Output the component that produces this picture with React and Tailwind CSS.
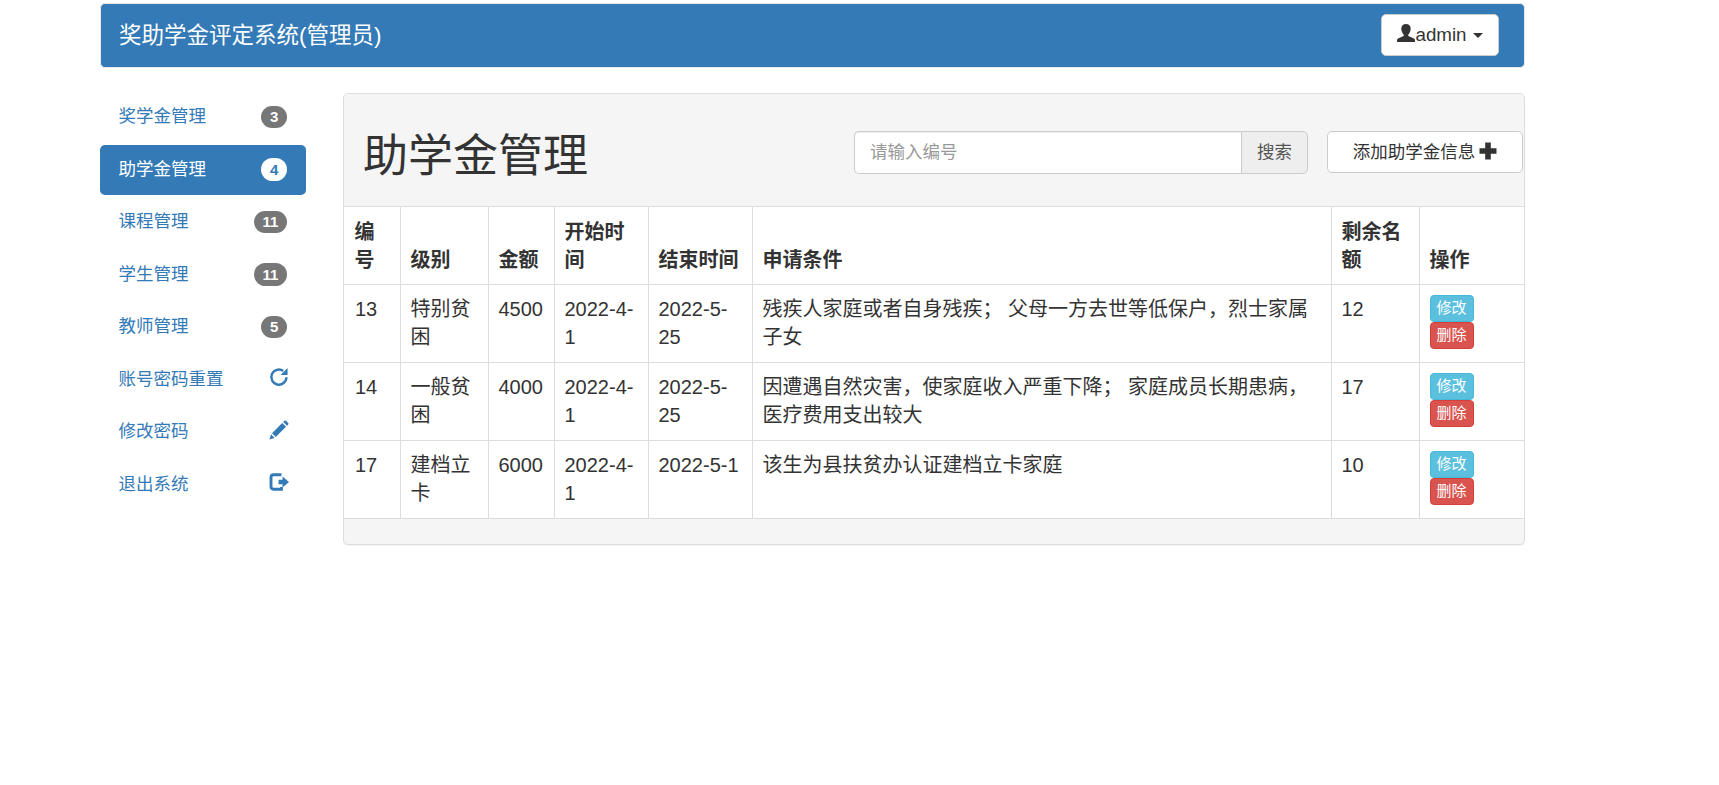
import React from "react";

const menus = [
  { name: "奖学金管理", count: 3 },
  { name: "助学金管理", count: 4, active: true },
  { name: "课程管理", count: 11 },
  { name: "学生管理", count: 11 },
  { name: "教师管理", count: 5 },
  { name: "账号密码重置", icon: "refresh" },
  { name: "修改密码", icon: "pencil" },
  { name: "退出系统", icon: "logout" },
];

const columns = ["编号", "级别", "金额", "开始时间", "结束时间", "申请条件", "剩余名额", "操作"];

const rows = [
  ["13", "特别贫困", "4500", "2022-4-1", "2022-5-25", "残疾人家庭或者自身残疾； 父母一方去世等低保户，烈士家属子女", "12"],
  ["14", "一般贫困", "4000", "2022-4-1", "2022-5-25", "因遭遇自然灾害，使家庭收入严重下降； 家庭成员长期患病，医疗费用支出较大", "17"],
  ["17", "建档立卡", "6000", "2022-4-1", "2022-5-1", "该生为县扶贫办认证建档立卡家庭", "10"],
];

const Icon = ({ name, className }) => (
  <svg viewBox="0 0 18 18" className={className} fill="currentColor">
    {name === "refresh" && (
      <>
        <path d="M15.7 9.200A6.800 6.800 0 1 1 12.800 3.500" fill="none" stroke="currentColor" strokeWidth="2.200" />
        <path d="M16.700.9v6.300h-6.300z" />
      </>
    )}
    {name === "pencil" && (
      <path d="M.4 17.600l1.500-4.700 3.200 3.200zM2.700 11.900L11.900 2.700l3.400 3.400-9.200 9.200zM12.800 1.800L13.900.7q.7-.6 1.400 0l2 2q.6.7 0 1.400l-1.100 1.100z" />
    )}
    {name === "logout" && (
      <>
        <path d="M11.200 2.500H4.200Q1.800 2.500 1.800 4.900v8.200q0 2.400 2.400 2.400h7v-2" fill="none" stroke="currentColor" strokeWidth="2.600" />
        <path d="M8.600 6.900h3.600V4.100L18 9l-5.800 4.900v-2.800H8.600z" />
      </>
    )}
    {name === "user" && (
      <path d="M9 0c2.900 0 4.700 1.800 4.700 4.600 0 2.400-.9 4.600-2.300 5.800-.4.700-.2 1.500.5 1.900l4.600 2c1 .5 1.500 1.100 1.500 2.100V18H0v-1.600c0-1 .5-1.600 1.500-2.100l4.600-2c.7-.4.9-1.200.5-1.900C5.200 9.200 4.300 7 4.300 4.600 4.300 1.800 6.100 0 9 0z" />
    )}
    {name === "plus" && <path d="M6.200.5h5.600v5.700h5.700v5.600h-5.700v5.700H6.200v-5.700H.5V6.200h5.700z" />}
  </svg>
);

const Navbar = () => (
  <nav className="ml-[100px] flex h-[65px] w-[1425px] items-start justify-between rounded-[5px] border border-[#e7e7e7] bg-[#337ab7] pr-[25px] pl-[18px]">
    <span className="pt-[16px] text-[22.5px] leading-[32px] text-white">奖助学金评定系统(管理员)</span>
    <button className="mt-[10px] flex h-[42px] w-[118px] items-center rounded-[5px] border border-[#ccc] bg-white pl-[15px] text-[18.75px]">
      <Icon name="user" className="-mt-1 h-[18px] w-[18px]" />
      <span className="w-[52px]">admin</span>
      <span className="ml-[6px] border-x-[5px] border-t-[5px] border-x-transparent border-t-[#333]" />
    </button>
  </nav>
);

const Sidebar = () => (
  <ul className="w-[206px] space-y-[2.5px] text-[17.5px] leading-[25px]">
    {menus.map((item) => (
      <li
        key={item.name}
        className={`flex h-[50px] items-center justify-between rounded-[5px] pr-[19px] pb-[1.5px] pl-[18.5px] ${
          item.active ? "bg-[#337ab7] text-white" : "text-[#337ab7]"
        }`}
      >
        {item.name}
        {item.count && (
          <span
            className={`rounded-[12.5px] px-[8.75px] py-[3.75px] text-[15px] leading-[15px] font-bold ${
              item.active ? "bg-white text-[#337ab7]" : "bg-[#777] text-white"
            }`}
          >
            {item.count}
          </span>
        )}
        {item.icon && <Icon name={item.icon} className="-mt-[4px] -mr-[2px] h-[20px] w-[20px]" />}
      </li>
    ))}
  </ul>
);

const PanelHeading = () => (
  <div className="flex h-[112px] items-start bg-[#f5f5f5] pl-[19px]">
    <h1 className="w-[491px] pt-[38px] text-[45px] leading-[50px]">助学金管理</h1>
    <div className="mt-[37px] flex h-[43px] w-[454px] text-[17.5px]">
      <input
        type="text"
        placeholder="请输入编号"
        className="w-[387px] rounded-l-[5px] border border-r-0 border-[#ccc] bg-white px-[15px] shadow-[inset_0_1px_1px_rgba(0,0,0,0.075)] outline-0 placeholder:text-[#999]"
      />
      <span className="flex flex-1 items-center justify-center rounded-r-[5px] border border-[#ccc] bg-[#eee] text-[#555]">
        搜索
      </span>
    </div>
    <button className="mt-[37px] ml-[19px] flex h-[42px] w-[196px] items-center justify-center rounded-[5px] border border-[#ccc] bg-white text-[17.5px]">
      添加助学金信息
      <Icon name="plus" className="-mt-[3px] ml-[4px] h-[18px] w-[18px]" />
    </button>
  </div>
);

const Table = () => (
  <table className="w-[1180px] table-fixed border-collapse bg-white text-[20px] leading-[28px]">
    <colgroup>
      <col className="w-[56.5px]" />
      <col className="w-[88px]" />
      <col className="w-[66px]" />
      <col className="w-[94px]" />
      <col className="w-[104px]" />
      <col className="w-[579px]" />
      <col className="w-[88px]" />
      <col />
    </colgroup>
    <thead>
      <tr className="h-[78px]">
        {columns.map((name) => (
          <th key={name} className="border border-[#ddd] px-[9.5px] pb-[10px] text-left align-bottom font-bold first:border-l-0 first:pl-[10.5px] last:border-r-0">
            {name}
          </th>
        ))}
      </tr>
    </thead>
    <tbody>
      {rows.map((row) => (
        <tr key={row[0]} className="h-[78px]">
          {row.map((cell, i) => (
            <td key={i} className="border border-[#ddd] pt-[10px] pr-[9px] pl-[9.5px] align-top first:border-l-0 first:pl-[11px]">
              {cell}
            </td>
          ))}
          <td className="border border-r-0 border-[#ddd] pt-[10px] pl-[9.5px] align-top">
            <div className="flex w-[44px] flex-col text-[15px] leading-[22px] text-white">
              <button className="h-[27px] rounded-[4px] border border-[#46b8da] bg-[#5bc0de] pb-[2px]">修改</button>
              <button className="h-[27px] rounded-[4px] border border-[#d43f3a] bg-[#d9534f] pb-[2px]">删除</button>
            </div>
          </td>
        </tr>
      ))}
    </tbody>
  </table>
);

const App = () => {
  return (
    <div className="min-h-screen bg-white pt-[3px] font-['Liberation_Sans','Noto_Sans_CJK_SC',sans-serif] text-[#333]">
      <Navbar />
      <div className="ml-[100px] flex items-start pt-[24.5px]">
        <Sidebar />
        <div className="mt-[0.5px] ml-[37px] h-[452px] w-[1182px] overflow-hidden rounded-[5px] border border-[#ddd] bg-[#f5f5f5] shadow-[0_1px_1px_rgba(0,0,0,0.05)]">
          <PanelHeading />
          <Table />
        </div>
      </div>
    </div>
  );
};

export default App;
